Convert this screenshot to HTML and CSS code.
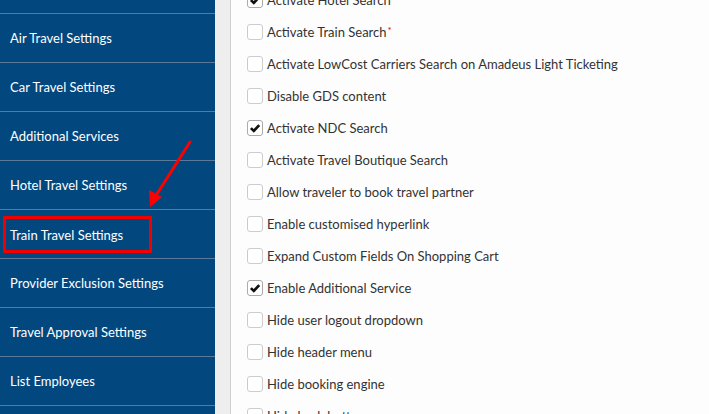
FILE: index.html
```html
<!DOCTYPE html>
<html>
<head>
<meta charset="utf-8">
<link rel="stylesheet" href="styles.css">
</head>
<body>
<div class="page">
  <nav class="sidebar">
    <ul class="menu">
      <li class="menu-item"></li>
      <li class="menu-item">Air Travel Settings</li>
      <li class="menu-item">Car Travel Settings</li>
      <li class="menu-item">Additional Services</li>
      <li class="menu-item">Hotel Travel Settings</li>
      <li class="menu-item highlighted"><span class="label">Train Travel Settings</span></li>
      <li class="menu-item">Provider Exclusion Settings</li>
      <li class="menu-item">Travel Approval Settings</li>
      <li class="menu-item">List Employees</li>
      <li class="menu-item"></li>
    </ul>
    <svg class="arrow" width="60" height="80" viewBox="0 0 60 80">
      <line x1="50" y1="7" x2="15" y2="62" stroke="#f00" stroke-width="3" stroke-linecap="round"/>
      <polygon points="10,72 9,55 22,62" fill="#f00"/>
    </svg>
  </nav>
  <div class="gutter"></div>
  <main class="content">
    <ul class="options">
      <li class="option"><span class="box checked"><svg viewBox="0 0 16 16"><path d="M3.3 8.1 L6.6 11.4 L12.8 4.6" fill="none" stroke="#111" stroke-width="3"/></svg></span>Activate Hotel Search</li>
      <li class="option"><span class="box"></span>Activate Train Search<sup class="req">*</sup></li>
      <li class="option"><span class="box"></span>Activate LowCost Carriers Search on Amadeus Light Ticketing</li>
      <li class="option"><span class="box"></span>Disable GDS content</li>
      <li class="option"><span class="box checked"><svg viewBox="0 0 16 16"><path d="M3.3 8.1 L6.6 11.4 L12.8 4.6" fill="none" stroke="#111" stroke-width="3"/></svg></span>Activate NDC Search</li>
      <li class="option"><span class="box"></span>Activate Travel Boutique Search</li>
      <li class="option"><span class="box"></span>Allow traveler to book travel partner</li>
      <li class="option"><span class="box"></span>Enable customised hyperlink</li>
      <li class="option"><span class="box"></span>Expand Custom Fields On Shopping Cart</li>
      <li class="option"><span class="box checked"><svg viewBox="0 0 16 16"><path d="M3.3 8.1 L6.6 11.4 L12.8 4.6" fill="none" stroke="#111" stroke-width="3"/></svg></span>Enable Additional Service</li>
      <li class="option"><span class="box"></span>Hide user logout dropdown</li>
      <li class="option"><span class="box"></span>Hide header menu</li>
      <li class="option"><span class="box"></span>Hide booking engine</li>
      <li class="option"><span class="box"></span>Hide back button</li>
    </ul>
  </main>
</div>
</body>
</html>
```

FILE: styles.css
```css
html, body {
  margin: 0;
  padding: 0;
  height: 100%;
  overflow: hidden;
  background: #fdfdfd;
  font-family: Lato, "Open Sans", sans-serif;
}
.page {
  display: flex;
  height: 414px;
}
.sidebar {
  width: 215px;
  flex: none;
  background: #02487f;
  position: relative;
  overflow: hidden;
}
.menu {
  list-style: none;
  margin: -35px 0 0 0;
  padding: 0;
}
.menu-item {
  height: 48px;
  border-bottom: 1px solid #5a7898;
  display: flex;
  align-items: center;
  padding-left: 10px;
  color: #fff;
  font-size: 13px;
}
.menu-item.highlighted {
  padding-left: 3px;
}
.menu-item.highlighted .label {
  display: flex;
  align-items: center;
  width: 139px;
  height: 31px;
  border: 3px solid #f20000;
  padding-left: 4px;
  margin-top: 1px;
}
.arrow {
  position: absolute;
  left: 140px;
  top: 135px;
}
.gutter {
  width: 15px;
  flex: none;
  background: #eeeeee;
  border-right: 1px solid #cfcfcf;
}
.content {
  flex: 1;
  background: #fdfdfd;
  padding-left: 16px;
  overflow: hidden;
}
.options {
  list-style: none;
  margin: -16px 0 0 0;
  padding: 0;
}
.option {
  height: 32px;
  display: flex;
  align-items: center;
  font-size: 13px;
  color: #333;
  white-space: nowrap;
}
.box {
  width: 14px;
  height: 14px;
  border: 1px solid #cccccc;
  border-radius: 3px;
  background: #fff;
  margin-right: 4px;
  flex: none;
  display: flex;
  align-items: center;
  justify-content: center;
}
.box.checked {
  border-color: #aaa;
}
.box svg {
  width: 16px;
  height: 16px;
}
.req {
  color: #e00;
  font-size: 10px;
  align-self: flex-start;
  margin-top: 8px;
  margin-left: 1px;
}
```
